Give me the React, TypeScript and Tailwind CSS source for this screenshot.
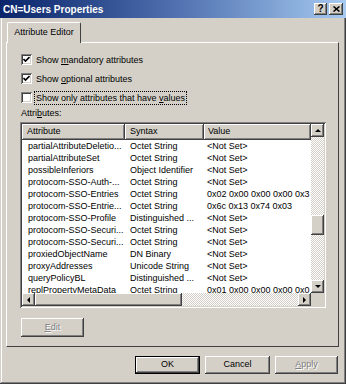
import React from "react";

const raised =
  "shadow-[inset_-1px_-1px_#404040,inset_1px_1px_#ffffff,inset_-2px_-2px_#808080,inset_2px_2px_#d4d0c8]";
const sunken =
  "shadow-[inset_1px_1px_#808080,inset_-1px_-1px_#ffffff,inset_2px_2px_#404040,inset_-2px_-2px_#d4d0c8]";
const dither =
  "bg-[repeating-conic-gradient(#d4d0c8_0%_25%,#ffffff_0%_50%)] bg-[length:2px_2px]";
const disabled = "text-[#808080] [text-shadow:1px_1px_0_#ffffff]";

type Row = { name: string; syntax: string; value: string };

const rows: Row[] = [
  { name: "partialAttributeDeletio...", syntax: "Octet String", value: "<Not Set>" },
  { name: "partialAttributeSet", syntax: "Octet String", value: "<Not Set>" },
  { name: "possibleInferiors", syntax: "Object Identifier", value: "<Not Set>" },
  { name: "protocom-SSO-Auth-...", syntax: "Octet String", value: "<Not Set>" },
  { name: "protocom-SSO-Entries", syntax: "Octet String", value: "0x02 0x00 0x00 0x00 0x3" },
  { name: "protocom-SSO-Entrie...", syntax: "Octet String", value: "0x6c 0x13 0x74 0x03" },
  { name: "protocom-SSO-Profile", syntax: "Distinguished ...", value: "<Not Set>" },
  { name: "protocom-SSO-Securi...", syntax: "Octet String", value: "<Not Set>" },
  { name: "protocom-SSO-Securi...", syntax: "Octet String", value: "<Not Set>" },
  { name: "proxiedObjectName", syntax: "DN Binary", value: "<Not Set>" },
  { name: "proxyAddresses", syntax: "Unicode String", value: "<Not Set>" },
  { name: "queryPolicyBL", syntax: "Distinguished ...", value: "<Not Set>" },
  { name: "replPropertyMetaData", syntax: "Octet String", value: "0x01 0x00 0x00 0x00 0x0" },
];

function Arrow({ dir }: { dir: "up" | "down" | "left" | "right" }) {
  const pts = {
    up: "1,4 7,4 4,1",
    down: "1,1 7,1 4,4",
    left: "4,1 4,7 1,4",
    right: "1,1 1,7 4,4",
  }[dir];
  const vertical = dir === "up" || dir === "down";
  return (
    <svg width={vertical ? 8 : 5} height={vertical ? 5 : 8} viewBox={vertical ? "0 0 8 5" : "0 0 5 8"}>
      <polygon points={pts} fill="#000" />
    </svg>
  );
}

function Check({ checked, children, focus }: { checked: boolean; children: React.ReactNode; focus?: boolean }) {
  return (
    <div className="h-[19px] flex items-center pl-[1px]">
      <div className={`w-[11px] h-[11px] bg-white ${sunken} flex items-center justify-center`}>
        {checked && (
          <svg width="7" height="7" viewBox="0 0 7 7">
            <polyline points="0.5,3 2.5,5 6.5,1" fill="none" stroke="#000" strokeWidth="1.6" />
          </svg>
        )}
      </div>
      <span className={`ml-[3px] px-[1px] leading-[12px] ${focus ? "outline outline-1 outline-dotted outline-black" : ""}`}>
        {children}
      </span>
    </div>
  );
}

export default function App() {
  return (
    <div
      className="w-[346px] h-[384px] bg-[#d4d0c8] flex flex-col text-[9px] text-black shadow-[inset_-1px_-1px_#404040,inset_1px_1px_#d4d0c8,inset_-2px_-2px_#808080,inset_2px_2px_#ffffff]"
      style={{ fontFamily: '"Liberation Sans", Arial, sans-serif' }}
    >
      {/* title bar */}
      <div className="h-[18px] flex items-center justify-between pl-[3px] pr-[3px] bg-linear-to-r from-[#0a246a] via-[#4f6fae] to-[#a6caf0]">
        <span className="text-white font-bold text-[10px]">CN=Users Properties</span>
        <div className="flex gap-[2px]">
          <div className={`w-[13px] h-[12px] ${raised} bg-[#d4d0c8] flex items-center justify-center font-bold text-[10px] leading-none`}>?</div>
          <div className={`w-[14px] h-[12px] ${raised} bg-[#d4d0c8] flex items-center justify-center`}>
            <svg width="7" height="6" viewBox="0 0 7 6">
              <path d="M0.5 0.5 L6.5 5.5 M6.5 0.5 L0.5 5.5" stroke="#000" strokeWidth="1.6" />
            </svg>
          </div>
        </div>
      </div>

      <div className="flex-1 flex flex-col px-[3px] pb-[3px]">
        {/* tab strip */}
        <div className="mt-[4px] pl-[4px] flex relative z-10 -mb-[1px]">
          <div className="w-[74px] h-[21px] border-l border-t border-white rounded-tl-[2px] rounded-tr-[2px] border-r border-r-[#404040] bg-[#d4d0c8] flex items-center justify-center">
            Attribute Editor
          </div>
        </div>

        {/* tab panel */}
        <div className="ml-[3px] w-[333px] h-[305px] border-l border-t border-white border-r border-b border-r-[#404040] border-b-[#404040] flex flex-col pl-[13px] pt-[7px]">
          <Check checked>
            Show <u>m</u>andatory attributes
          </Check>
          <Check checked>
            Show <u>o</u>ptional attributes
          </Check>
          <Check checked={false} focus>
            Show only attributes that have <u>v</u>alues
          </Check>
          <div className="h-[12px] leading-[12px] pl-[1px]">
            Attri<u>b</u>utes:
          </div>

          {/* list view */}
          <div className={`mt-[3px] w-[306px] h-[186px] p-[2px] ${sunken} bg-white flex flex-col`}>
            <div className="flex flex-1 min-h-0">
              <div className="flex-1 flex flex-col overflow-hidden">
                <div className="h-[16px] flex shrink-0">
                  <div className={`w-[103px] ${raised} bg-[#d4d0c8] pl-[5px] flex items-center`}>Attribute</div>
                  <div className={`w-[79px] ${raised} bg-[#d4d0c8] pl-[5px] flex items-center`}>Syntax</div>
                  <div className={`flex-1 ${raised} bg-[#d4d0c8] pl-[4px] flex items-center`}>Value</div>
                </div>
                {rows.map((r, i) => (
                  <div key={i} className="h-[12px] leading-[12px] flex shrink-0 whitespace-nowrap">
                    <div className="w-[103px] pl-[6px] overflow-hidden">{r.name}</div>
                    <div className="w-[79px] pl-[5px] overflow-hidden">{r.syntax}</div>
                    <div className="flex-1 pl-[3px] overflow-hidden">{r.value}</div>
                  </div>
                ))}
              </div>
              {/* vertical scrollbar */}
              <div className="w-[13px] flex flex-col">
                <div className={`h-[13px] ${raised} bg-[#d4d0c8] flex items-center justify-center`}>
                  <Arrow dir="up" />
                </div>
                <div className={`h-[78px] ${dither}`} />
                <div className={`h-[20px] ${raised} bg-[#d4d0c8]`} />
                <div className={`flex-1 ${dither}`} />
                <div className={`h-[13px] ${raised} bg-[#d4d0c8] flex items-center justify-center`}>
                  <Arrow dir="down" />
                </div>
              </div>
            </div>
            {/* horizontal scrollbar */}
            <div className="h-[13px] flex shrink-0">
              <div className={`w-[13px] ${raised} bg-[#d4d0c8] flex items-center justify-center`}>
                <Arrow dir="left" />
              </div>
              <div className={`w-[147px] ${raised} bg-[#d4d0c8]`} />
              <div className={`flex-1 ${dither}`} />
              <div className={`w-[13px] ${raised} bg-[#d4d0c8] flex items-center justify-center`}>
                <Arrow dir="right" />
              </div>
              <div className="w-[13px] bg-[#d4d0c8]" />
            </div>
          </div>

          <div className={`mt-[10px] ml-[1px] w-[63px] h-[19px] ${raised} flex items-center justify-center ${disabled}`}>
            <u>E</u>dit
          </div>
        </div>

        {/* dialog buttons */}
        <div className="mt-[9px] flex justify-end gap-[5px] pr-[5px]">
          <div className="w-[65px] h-[18px] border border-black">
            <div className={`w-full h-full ${raised} flex items-center justify-center`}>OK</div>
          </div>
          <div className={`w-[65px] h-[18px] ${raised} flex items-center justify-center`}>Cancel</div>
          <div className={`w-[63px] h-[18px] ${raised} flex items-center justify-center ${disabled}`}>
            <u>A</u>pply
          </div>
        </div>
      </div>
    </div>
  );
}
